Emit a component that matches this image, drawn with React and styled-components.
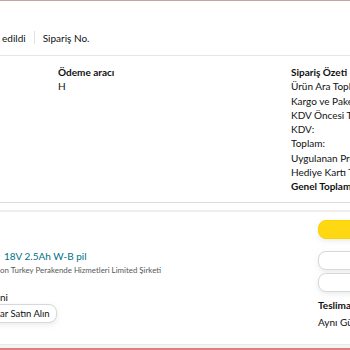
import React from 'react'
import styled, { createGlobalStyle } from 'styled-components'

const GlobalStyle = createGlobalStyle`
  body {
    margin: 0;
    background: #fff;
    font-family: Lato, "Open Sans", sans-serif;
    color: #0f1111;
    overflow: hidden;
  }
`

const Page = styled.div`
  width: 350px;
  height: 350px;
  overflow: hidden;
  display: flex;
  flex-direction: column;
  font-size: 10px;
  white-space: nowrap;
`

const TopRule = styled.div`
  height: 1px;
  background: #c7a2a2;
`

const OrderHeader = styled.div`
  height: 54px;
  display: flex;
  align-items: flex-end;
  gap: 8px;
  padding: 0 0 10px 2px;
  box-sizing: border-box;
  line-height: 14px;
`

const Divider = styled.span`
  width: 1px;
  height: 13px;
  margin: 0 0 1px;
  background: #e3e3e3;
`

const DetailsCard = styled.section`
  border-top: 1px solid #e6e6e6;
  border-bottom: 1px solid #dedede;
  display: grid;
  grid-template-columns: 58px 233px 1fr;
  padding: 9px 0 9px;
  line-height: 14.25px;
`

const Column = styled.div`
  display: flex;
  flex-direction: column;
  overflow: hidden;
`

const Title = styled.div`
  font-weight: 700;
`

const Gap = styled.div`
  height: 7px;
`

const ItemCard = styled.section`
  flex: 1;
  border-top: 2px solid #eeeeee;
  border-bottom: 1px solid #e9e9e9;
  display: grid;
  grid-template-columns: 318px 1fr;
  padding-top: 8px;
`

const ProductInfo = styled.div`
  display: flex;
  flex-direction: column;
  align-items: flex-start;
  padding-top: 29px;
`

const ProductLink = styled.a`
  display: block;
  color: #007185;
  font-size: 10px;
  line-height: 14px;
  margin-left: 4px;
  text-decoration: none;
`

const Seller = styled.div`
  color: #565959;
  font-size: 7.9px;
  line-height: 12px;
  margin-top: 1px;
`

const Condition = styled.div`
  line-height: 14px;
  margin-top: 14px;
`

const Button = styled.button`
  box-sizing: border-box;
  height: 19px;
  border-radius: 8px;
  font-family: inherit;
  font-size: 10px;
  color: #0f1111;
  padding: 0 8px;
  border: 1px solid ${p => (p.$primary ? '#fcd200' : '#d5d9d9')};
  background: ${p => (p.$primary ? '#ffd814' : '#fff')};
  box-shadow: 0 2px 5px rgba(213, 217, 217, 0.5);
`

const BuyAgain = styled(Button)`
  margin-left: -30px;
  padding: 0 6px 0 29px;
  font-size: 9.5px;
  text-align: left;
`

const Actions = styled.div`
  display: flex;
  flex-direction: column;
  width: 200px;
  ${Button} {
    width: 200px;
    text-align: center;
  }
`

const Delivery = styled.div`
  margin-top: 5px;
  line-height: 17px;
`

const BottomBand = styled.div`
  height: 3px;
  background: #f4f4f4;
`

const BottomRule = styled.div`
  height: 2px;
  background: #e07d7d;
`

export default function App() {
  return (
    <>
      <GlobalStyle />
      <Page>
        <TopRule />
        <OrderHeader>
          <span>edildi</span>
          <Divider />
          <span>Sipariş No.</span>
        </OrderHeader>
        <DetailsCard>
          <Column />
          <Column>
            <Title>Ödeme aracı</Title>
            <div>H</div>
          </Column>
          <Column>
            <Title>Sipariş Özeti</Title>
            <div>Ürün Ara Toplamı:</div>
            <div>Kargo ve Paketleme:</div>
            <div>KDV Öncesi Toplam:</div>
            <div>KDV:</div>
            <div>Toplam:</div>
            <div>Uygulanan Promosyon:</div>
            <div>Hediye Kartı Tutarı:</div>
            <Title>Genel Toplam:</Title>
          </Column>
        </DetailsCard>
        <Gap />
        <ItemCard>
          <ProductInfo>
            <ProductLink href="#">18V 2.5Ah W-B pil</ProductLink>
            <Seller>on Turkey Perakende Hizmetleri Limited Şirketi</Seller>
            <Condition>ni</Condition>
            <BuyAgain>ar Satın Alın</BuyAgain>
          </ProductInfo>
          <Actions>
            <Button $primary>Ürünü takip et</Button>
            <Button style={{ marginTop: 12 }}>İade et</Button>
            <Button style={{ marginTop: 3 }}>Satıcıya sor</Button>
            <Delivery>
              <Title>Teslimat</Title>
              <div>Aynı Gün</div>
            </Delivery>
          </Actions>
        </ItemCard>
        <BottomBand />
        <BottomRule />
      </Page>
    </>
  )
}
